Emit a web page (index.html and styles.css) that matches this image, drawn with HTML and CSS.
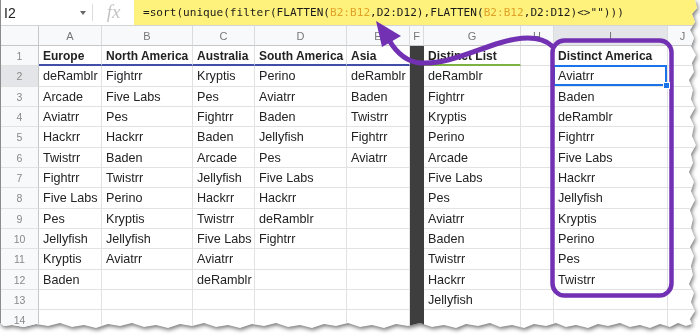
FILE: index.html
```html
<!DOCTYPE html>
<html lang="en">
<head>
	<meta charset="UTF-8">
	<title>Distinct America</title>
	<link rel="stylesheet" href="styles.css">
</head>
<body>
	<div class="shot">
		<div class="sheet">
			<div class="formula-bar">
				<div class="name-box">I2 <span class="caret"></span></div>
				<div class="sep"></div>
				<div class="fx">fx</div>
				<div class="formula">=sort(unique(filter(FLATTEN(<span class="ref">B2:B12</span>,D2:D12),FLATTEN(<span class="ref">B2:B12</span>,D2:D12)&lt;&gt;"")))</div>
			</div>

			<div class="row head">
				<div class="corner"></div><div>A</div><div>B</div><div>C</div><div>D</div><div>E</div><div>F</div><div>G</div><div>H</div><div class="on">I</div><div>J</div>
			</div>
			<div class="row titles">
				<div class="num">1</div>
				<div class="line-blue">Europe</div>
				<div class="line-blue">North America</div>
				<div class="line-blue">Australia</div>
				<div class="line-blue">South America</div>
				<div class="line-blue">Asia</div>
				<div class="dark"></div>
				<div class="line-green">Distinct List</div>
				<div></div>
				<div>Distinct America</div>
				<div></div>
			</div>
			<div class="row">
				<div class="num on">2</div><div>deRamblr</div><div>Fightrr</div><div>Kryptis</div><div>Perino</div><div>deRamblr</div><div class="dark"></div><div>deRamblr</div><div></div><div class="sel">Aviatrr</div><div></div>
			</div>
			<div class="row">
				<div class="num">3</div><div>Arcade</div><div>Five Labs</div><div>Pes</div><div>Aviatrr</div><div>Baden</div><div class="dark"></div><div>Fightrr</div><div></div><div>Baden</div><div></div>
			</div>
			<div class="row">
				<div class="num">4</div><div>Aviatrr</div><div>Pes</div><div>Fightrr</div><div>Baden</div><div>Twistrr</div><div class="dark"></div><div>Kryptis</div><div></div><div>deRamblr</div><div></div>
			</div>
			<div class="row">
				<div class="num">5</div><div>Hackrr</div><div>Hackrr</div><div>Baden</div><div>Jellyfish</div><div>Fightrr</div><div class="dark"></div><div>Perino</div><div></div><div>Fightrr</div><div></div>
			</div>
			<div class="row">
				<div class="num">6</div><div>Twistrr</div><div>Baden</div><div>Arcade</div><div>Pes</div><div>Aviatrr</div><div class="dark"></div><div>Arcade</div><div></div><div>Five Labs</div><div></div>
			</div>
			<div class="row">
				<div class="num">7</div><div>Fightrr</div><div>Twistrr</div><div>Jellyfish</div><div>Five Labs</div><div></div><div class="dark"></div><div>Five Labs</div><div></div><div>Hackrr</div><div></div>
			</div>
			<div class="row">
				<div class="num">8</div><div>Five Labs</div><div>Perino</div><div>Hackrr</div><div>Hackrr</div><div></div><div class="dark"></div><div>Pes</div><div></div><div>Jellyfish</div><div></div>
			</div>
			<div class="row">
				<div class="num">9</div><div>Pes</div><div>Kryptis</div><div>Twistrr</div><div>deRamblr</div><div></div><div class="dark"></div><div>Aviatrr</div><div></div><div>Kryptis</div><div></div>
			</div>
			<div class="row">
				<div class="num">10</div><div>Jellyfish</div><div>Jellyfish</div><div>Five Labs</div><div>Fightrr</div><div></div><div class="dark"></div><div>Baden</div><div></div><div>Perino</div><div></div>
			</div>
			<div class="row">
				<div class="num">11</div><div>Kryptis</div><div>Aviatrr</div><div>Aviatrr</div><div></div><div></div><div class="dark"></div><div>Twistrr</div><div></div><div>Pes</div><div></div>
			</div>
			<div class="row">
				<div class="num">12</div><div>Baden</div><div></div><div>deRamblr</div><div></div><div></div><div class="dark"></div><div>Hackrr</div><div></div><div>Twistrr</div><div></div>
			</div>
			<div class="row">
				<div class="num">13</div><div></div><div></div><div></div><div></div><div></div><div class="dark"></div><div>Jellyfish</div><div></div><div></div><div></div>
			</div>
			<div class="row">
				<div class="num">14</div><div></div><div></div><div></div><div></div><div></div><div class="dark"></div><div></div><div></div><div></div><div></div>
			</div>

			<!-- callout: box round the result and arrow up to the formula -->
			<svg class="marks" width="700" height="334" viewBox="0 0 700 334">
				<rect x="551.5" y="40.5" width="119" height="255" rx="12" fill="none" stroke="#7231b3" stroke-width="4.5"/>
				<path d="M551 46 C540 36 520 36 495 44 C465 54 445 64 420 63 C405 62 395 52 388 40" fill="none" stroke="#7231b3" stroke-width="5" stroke-linecap="round"/>
				<polygon points="375,21 381,47 400,36" fill="#7231b3"/>
			</svg>
		</div>
	</div>
</body>
</html>
```

FILE: styles.css
```css
body {
	margin: 0;
	background-color: #fff;
	font-family: "Liberation Sans", Arial, sans-serif;
}
.shot {
	width: 700px;
	height: 334px;
	filter: drop-shadow(1px 2px 2px rgba(0, 0, 0, 0.55));
}
.sheet {
	position: relative;
	width: 698px;
	height: 331px;
	overflow: hidden;
	box-sizing: border-box;
	border-left: 1px solid #8c8c8c;
	background-color: #fff;
	/* torn paper edge, right and bottom */
	clip-path: polygon(0 0, 695px 0, 697px 8px, 692px 14px, 695px 22px, 690px 30px, 694px 38px, 691px 46px, 696px 55px, 692px 63px, 694px 72px, 689px 80px, 693px 90px, 691px 99px, 695px 108px, 690px 117px, 694px 126px, 692px 136px, 696px 145px, 691px 154px, 693px 163px, 689px 172px, 694px 182px, 691px 191px, 695px 200px, 690px 210px, 693px 219px, 691px 228px, 695px 238px, 690px 247px, 694px 256px, 691px 266px, 693px 275px, 689px 284px, 694px 293px, 691px 302px, 695px 311px, 690px 319px, 692px 324px,
		686px 326px, 678px 323px, 670px 327px, 660px 324px, 650px 328px, 640px 325px, 630px 327px, 620px 323px, 608px 326px, 598px 324px, 588px 328px, 576px 325px, 566px 327px, 556px 323px, 546px 326px, 534px 324px, 524px 328px, 512px 325px, 500px 327px, 490px 323px, 478px 326px, 466px 324px, 456px 328px, 444px 325px, 432px 327px, 420px 323px, 408px 326px, 396px 324px, 384px 328px, 372px 325px, 360px 327px, 348px 323px, 336px 326px, 324px 324px, 312px 328px, 300px 325px, 288px 327px, 276px 323px, 264px 326px, 252px 324px, 240px 328px, 228px 325px, 216px 327px, 204px 323px, 192px 326px, 180px 324px, 168px 328px, 156px 325px, 144px 327px, 132px 323px, 120px 326px, 108px 324px, 96px 328px, 84px 325px, 72px 327px, 60px 323px, 48px 326px, 36px 324px, 24px 327px, 12px 325px, 4px 326px, 0 323px);
}

/* formula bar */
.formula-bar {
	display: flex;
	height: 26px;
	box-sizing: border-box;
	border-bottom: 1px solid #d4d4d4;
}
.name-box {
	width: 91px;
	display: flex;
	align-items: center;
	justify-content: space-between;
	box-sizing: border-box;
	padding: 0 6px 0 3px;
	font-size: 14px;
	color: #222;
}
.caret {
	width: 0;
	height: 0;
	border-left: 3.5px solid transparent;
	border-right: 3.5px solid transparent;
	border-top: 4px solid #666;
}
.sep {
	width: 1px;
	margin: 4px 0;
	background-color: #dadce0;
}
.fx {
	width: 41px;
	text-align: center;
	line-height: 24px;
	font-family: "Liberation Serif", serif;
	font-style: italic;
	font-size: 19px;
	color: #c4c4c4;
}
.formula {
	flex: 1;
	padding-left: 9px;
	background-color: #fff27c;
	font-family: "DejaVu Sans Mono", monospace;
	font-size: 11.1px;
	line-height: 25px;
	color: #1a1a1a;
	white-space: nowrap;
}
.ref {
	color: #e0a126;
}

/* grid */
.row {
	display: grid;
	grid-template-columns: 38px 63px 91px 62px 92px 63px 14px 97px 33px 114px 1fr;
	height: 20.35px;
}
.row > div {
	box-sizing: border-box;
	padding-left: 4px;
	border-right: 1px solid #e2e2e2;
	border-bottom: 1px solid #e2e2e2;
	line-height: 20px;
	font-size: 12.6px;
	color: #222;
	white-space: nowrap;
	overflow: hidden;
}
.row.head {
	height: 20px;
}
.row.head > div {
	padding: 0;
	text-align: center;
	background-color: #f8f9fa;
	border-right-color: #dcdcdc;
	border-bottom-color: #c7c7c7;
	font-size: 11px;
	color: #777;
}
.row.head > .corner {
	border-right-color: #c7c7c7;
}
.row > .num {
	padding: 0;
	text-align: center;
	background-color: #f8f9fa;
	border-right-color: #c7c7c7;
	font-size: 10.5px;
	color: #888;
}
.row > .on,
.row.head > .on {
	background-color: #e3e5e8;
}
.row.titles > div {
	font-weight: bold;
	font-size: 12px;
}
.row.titles > .num {
	font-weight: normal;
	font-size: 10.5px;
}
.row > .line-blue {
	border-bottom: 2px solid #3f4fa8;
}
.row > .line-green {
	border-bottom: 2px solid #7cb342;
}
.row > .dark {
	background-color: #3e3e3e;
	border-color: #3e3e3e;
}
.row > .sel {
	position: relative;
	overflow: visible;
}
.sel::after {
	content: "";
	position: absolute;
	left: -1px;
	top: -1px;
	right: 0;
	bottom: 0;
	border: 2px solid #1a73e8;
}
.sel::before {
	content: "";
	position: absolute;
	right: -3px;
	bottom: -3px;
	width: 5px;
	height: 5px;
	border: 1px solid #fff;
	background-color: #1a73e8;
	z-index: 1;
}
.marks {
	position: absolute;
	left: 0;
	top: 0;
}
```
